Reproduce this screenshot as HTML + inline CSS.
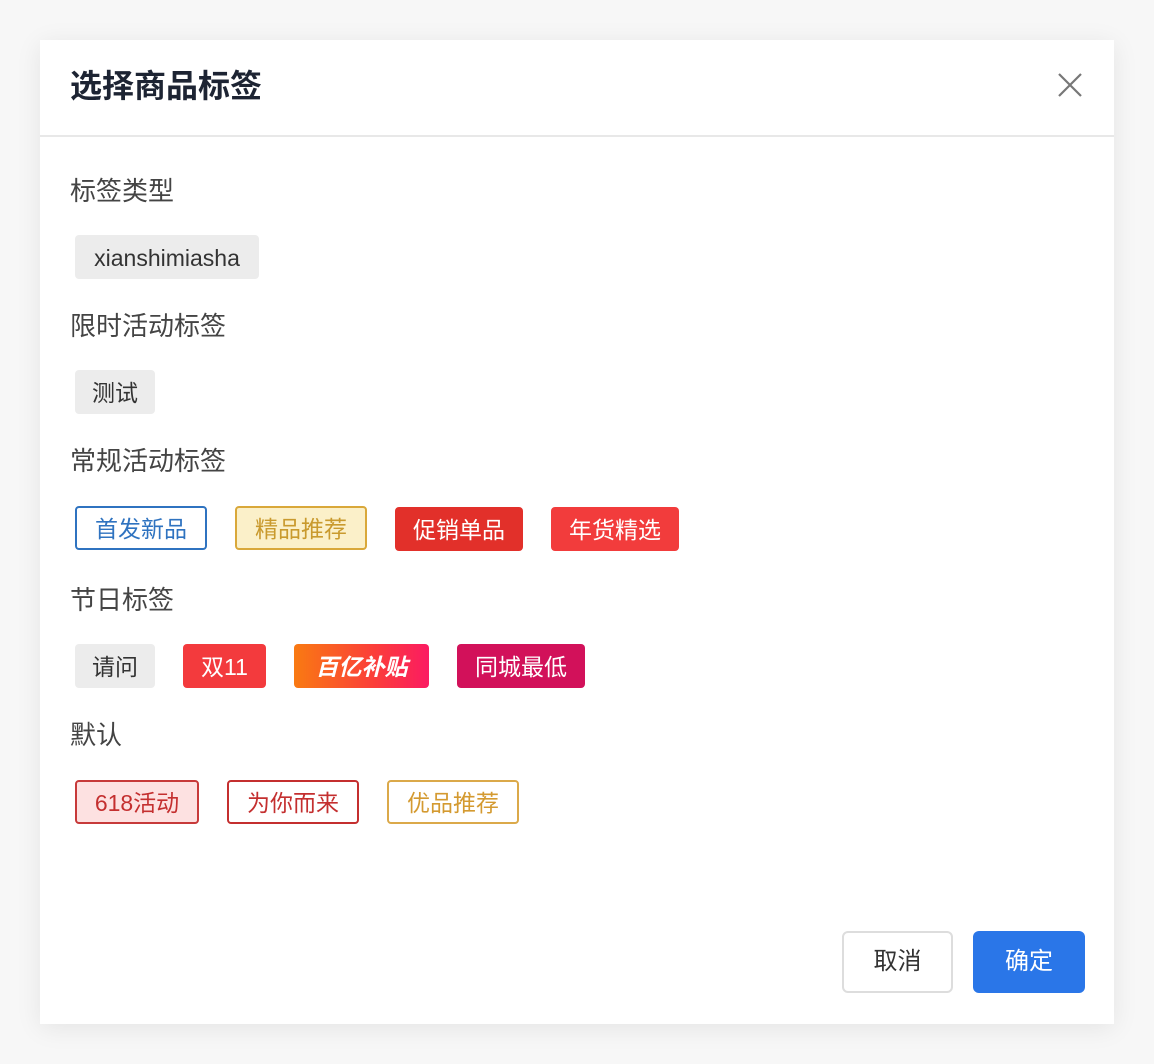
<!DOCTYPE html>
<html><head><meta charset="utf-8"><style>
html,body{margin:0;padding:0;}
body{width:1154px;height:1064px;background:#f7f7f7;position:relative;overflow:hidden;font-family:"Liberation Sans","Noto Sans CJK SC",sans-serif;}
.dlg{position:absolute;left:40px;top:40px;width:1074px;height:984px;background:#fff;box-shadow:0 4px 24px rgba(0,0,0,0.08);}
.title{position:absolute;left:70px;top:64px;font-size:32px;font-weight:bold;color:#1d2433;line-height:44px;}
.hr{position:absolute;left:40px;top:135px;width:1074px;height:2px;background:#e8e8e8;}
.lbl{position:absolute;left:70px;font-size:26px;color:#444;line-height:34px;}
.tag{position:absolute;box-sizing:border-box;height:44px;line-height:46px;font-size:23px;text-align:center;border-radius:4px;}
.o{border:2px solid;line-height:42px;}
.btn{position:absolute;box-sizing:border-box;top:931px;height:62px;line-height:62px;text-align:center;font-size:24px;border-radius:6px;}
</style></head><body>
<div class="dlg"></div>
<div class="title">选择商品标签</div>
<svg style="position:absolute;left:1058px;top:73px" width="24" height="24" viewBox="0 0 24 24"><path d="M1 1L23 23M23 1L1 23" stroke="#777" stroke-width="2.2" fill="none"/></svg>
<div class="hr"></div>

<div class="lbl" style="top:174px">标签类型</div>
<div class="tag" style="left:75px;top:235px;width:184px;background:#ececec;color:#333;">xianshimiasha</div>

<div class="lbl" style="top:309px">限时活动标签</div>
<div class="tag" style="left:75px;top:370px;width:80px;background:#ececec;color:#333;">测试</div>

<div class="lbl" style="top:444px">常规活动标签</div>
<div class="tag o" style="left:75px;top:506px;width:132px;border-color:#2f73c0;color:#2f73c0;">首发新品</div>
<div class="tag o" style="left:235px;top:506px;width:132px;border-color:#d9a83a;background:#fbf0c9;color:#c99a2e;">精品推荐</div>
<div class="tag" style="left:395px;top:507px;width:128px;background:#e2302a;color:#fff;">促销单品</div>
<div class="tag" style="left:551px;top:507px;width:128px;background:#f23c3c;color:#fff;">年货精选</div>

<div class="lbl" style="top:583px">节日标签</div>
<div class="tag" style="left:75px;top:644px;width:80px;background:#ececec;color:#333;">请问</div>
<div class="tag" style="left:183px;top:644px;width:83px;background:#f33a3d;color:#fff;">双11</div>
<div class="tag" style="left:294px;top:644px;width:135px;background:linear-gradient(90deg,#f97a12,#fb3d3a 60%,#fb1b62);color:#fff;font-weight:bold;font-style:italic;">百亿补贴</div>
<div class="tag" style="left:457px;top:644px;width:128px;background:#d2115a;color:#fff;">同城最低</div>

<div class="lbl" style="top:718px">默认</div>
<div class="tag o" style="left:75px;top:780px;width:124px;border-color:#c73a3a;background:#fde1e1;color:#c42f2f;">618活动</div>
<div class="tag o" style="left:227px;top:780px;width:132px;border-color:#c42f2f;color:#c42f2f;">为你而来</div>
<div class="tag o" style="left:387px;top:780px;width:132px;border-color:#dba94a;color:#d49a30;">优品推荐</div>

<div class="btn" style="left:842px;width:111px;border:2px solid #ddd;color:#333;line-height:58px;">取消</div>
<div class="btn" style="left:973px;width:112px;background:#2a76e8;color:#fff;">确定</div>
</body></html>
